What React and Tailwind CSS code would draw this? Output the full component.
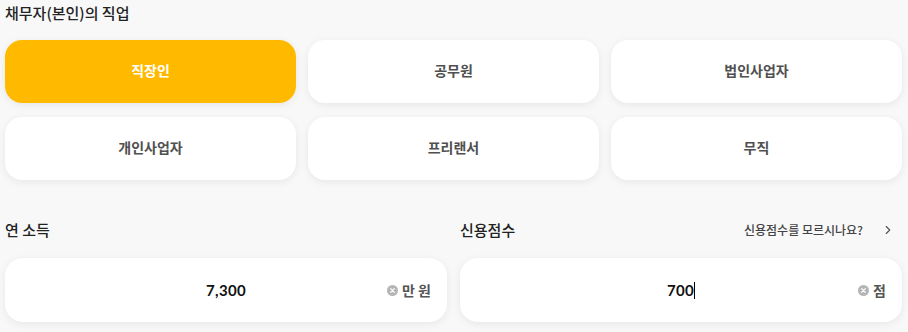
import React, { useState } from 'react';
import { ChevronRight } from 'lucide-react';

const jobs = ['직장인', '공무원', '법인사업자', '개인사업자', '프리랜서', '무직'];

const ClearIcon = () => (
  <svg width="11" height="11" viewBox="0 0 12 12" className="shrink-0">
    <circle cx="6" cy="6" r="6" fill="#b5b5b5" />
    <path d="M4 4 L8 8 M8 4 L4 8" stroke="#ffffff" strokeWidth="1.3" strokeLinecap="round" />
  </svg>
);

const NumberField = ({ value, unit, caret }) => (
  <div className="relative h-[64px] bg-white rounded-[18px] shadow-[0_2px_8px_rgba(0,0,0,0.07)] flex items-center">
    <div className="flex-1 text-center text-[15px] font-bold text-[#111] font-['Lato',sans-serif] tracking-[0.3px]">
      {value}
      {caret && <span className="inline-block w-px h-[17px] bg-black align-[-3px]" />}
    </div>
    <div className="absolute right-[16px] flex items-center gap-[4px]">
      <ClearIcon />
      <span className="text-[14px] font-bold text-[#555]">{unit}</span>
    </div>
  </div>
);

export default function App() {
  const [job, setJob] = useState('직장인');

  return (
    <div className="min-h-screen bg-[#f8f8f8] font-['Noto_Sans_CJK_KR','Noto_Sans',sans-serif] pl-[5px] pr-[6px] pt-[3px]">
      <h2 className="text-[15px] font-medium text-[#222] leading-[20px]">채무자(본인)의 직업</h2>

      <div className="grid grid-cols-3 gap-x-[12px] gap-y-[14px] mt-[17px]">
        {jobs.map((name) => (
          <button
            key={name}
            onClick={() => setJob(name)}
            className={`h-[63px] rounded-[17px] text-[14px] font-bold pb-[2px] shadow-[0_2px_8px_rgba(0,0,0,0.07)] ${
              job === name ? 'bg-[#ffba00] text-white' : 'bg-white text-[#505050]'
            }`}
          >
            {name}
          </button>
        ))}
      </div>

      <div className="grid grid-cols-2 gap-x-[13px] mt-[38px]">
        <div>
          <div className="h-[24px] flex items-center text-[15px] font-medium text-[#222]">연 소득</div>
          <div className="mt-[16px]">
            <NumberField value="7,300" unit="만 원" />
          </div>
        </div>
        <div>
          <div className="h-[24px] flex items-center justify-between text-[15px] font-medium text-[#222]">
            <span>신용점수</span>
            <span className="flex items-center gap-[18px] text-[12px] font-medium text-[#444]">
              신용점수를 모르시나요?
              <ChevronRight className="w-[14px] h-[14px] text-[#555] mr-[7px]" strokeWidth={2} />
            </span>
          </div>
          <div className="mt-[16px]">
            <NumberField value="700" unit="점" caret />
          </div>
        </div>
      </div>
    </div>
  );
}
